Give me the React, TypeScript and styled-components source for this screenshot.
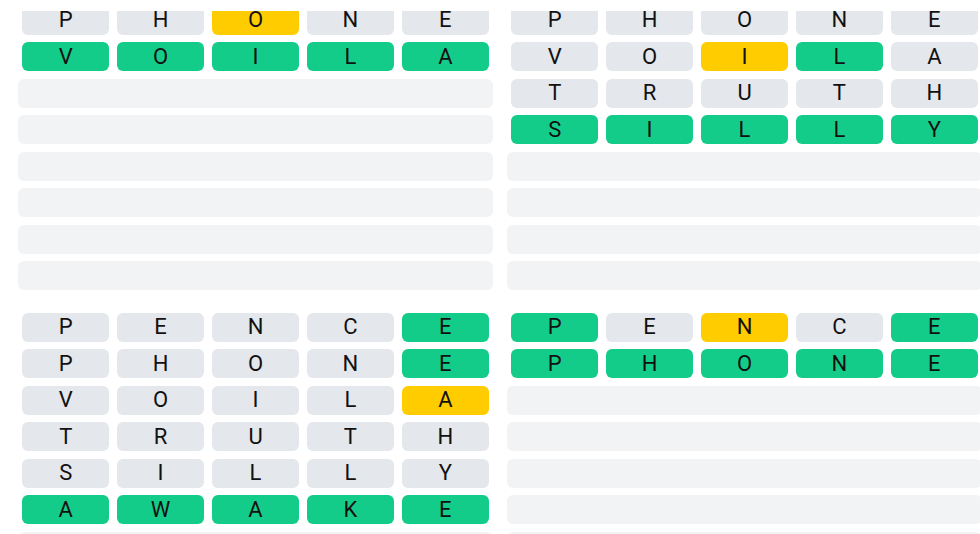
import { createGlobalStyle } from "styled-components";
import styled from "styled-components";

type Mark = "g" | "y" | "x";

const GlobalStyle = createGlobalStyle`
  html, body {
    margin: 0;
    padding: 0;
    background: #ffffff;
    overflow: hidden;
    font-family: Roboto, "Liberation Sans", sans-serif;
  }
`;

// white strip of the sticky header, lying over the scrolled boards
const HeaderEdge = styled.div`
  position: fixed;
  top: 0;
  left: 0;
  right: 0;
  height: 11px;
  background: #ffffff;
  z-index: 5;
`;

const Boards = styled.div`
  display: grid;
  grid-template-columns: 475px 475px;
  column-gap: 14px;
  row-gap: 22.5px;
  padding-left: 18px;
  margin-top: -31px; /* page is scrolled a bit */
`;

const Board = styled.div`
  display: flex;
  flex-direction: column;
  gap: 7.5px;
`;

const TileRow = styled.div`
  display: flex;
  gap: 7.5px;
  padding: 0 4px;
  height: 29px;
`;

const colors: Record<Mark, string> = {
  g: "#14cc8a",
  y: "#ffcc00",
  x: "#e4e7eb",
};

const Tile = styled.div<{ $mark: Mark }>`
  flex: 1;
  display: flex;
  align-items: center;
  justify-content: center;
  border-radius: 6px;
  background: ${(p) => colors[p.$mark]};
  color: #111111;
  font-size: 22px;
  line-height: 1;
`;

const EmptyRow = styled.div`
  height: 29px;
  border-radius: 6px;
  background: #f2f3f5;
`;

const guesses = ["PENCE", "PHONE", "VOILA", "TRUTH", "SILLY", "AWAKE"];

// marks for each board, one string per played row
const boards: string[][] = [
  ["xxxxx", "xxyxx", "ggggg"],
  ["xxxxx", "xxxxx", "xxygx", "xxxxx", "ggggg"],
  ["xxxxg", "xxxxg", "xxxxy", "xxxxx", "xxxxx", "ggggg"],
  ["gxyxg", "ggggg"],
];

export default function App() {
  return (
    <>
      <GlobalStyle />
      <HeaderEdge />
      <Boards>
        {boards.map((rows, b) => (
          <Board key={b}>
            {rows.map((marks, r) => (
              <TileRow key={r}>
                {guesses[r].split("").map((ch, i) => (
                  <Tile key={i} $mark={marks[i] as Mark}>
                    {ch}
                  </Tile>
                ))}
              </TileRow>
            ))}
            {Array.from({ length: 9 - rows.length }).map((_, i) => (
              <EmptyRow key={"e" + i} />
            ))}
          </Board>
        ))}
      </Boards>
    </>
  );
}
